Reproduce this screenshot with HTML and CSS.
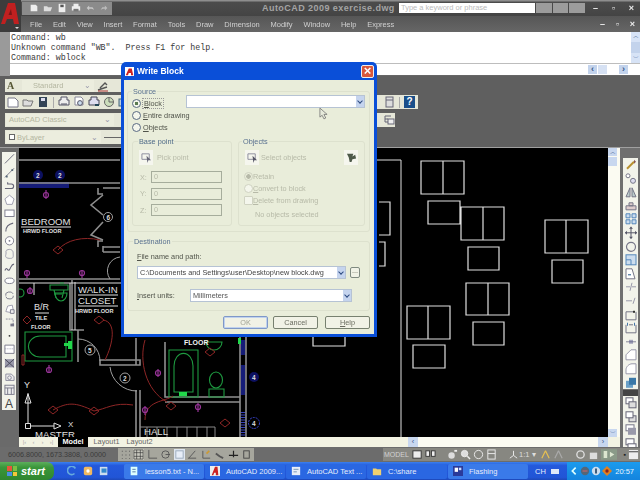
FILE: index.html
```html
<!DOCTYPE html>
<html lang="en">
<head>
<meta charset="utf-8">
<title>AutoCAD 2009 - Write Block</title>
<link rel="stylesheet" href="styles.css">
</head>
<body>
<div class="app">
  <svg class="logo" viewBox="0 0 21 32"><rect width="21" height="32" fill="#3c3c3c"/><path d="M1 24 8 3h7l4 21h-5l-1-5H7l-2 5z" fill="#c02020"/><path d="M8.500 15h3.500l-1-6z" fill="#7a1616"/><path d="m15 27 4 0-2 2z" fill="#ddd"/></svg>
  <header class="titlebar">
    <div class="quick">
      <svg class="qi" viewBox="0 0 12 12"><path d="M2 2h6l2 2v6H2z" fill="#eee"/></svg>
      <svg class="qi" viewBox="0 0 12 12"><path d="M1 4h4l1 1h5l-2 5H1z" fill="#ddd"/></svg>
      <svg class="qi" viewBox="0 0 12 12"><path d="M2 1h8v10H2z" fill="#eee"/><rect x="4" y="2" width="4" height="3" fill="#555"/></svg>
      <svg class="qi" viewBox="0 0 12 12"><path d="M3 1h6v3h2v5H1V4h2z" fill="#eee"/><rect x="3" y="7" width="6" height="3" fill="#777"/></svg>
      <svg class="qi" viewBox="0 0 12 12"><path d="M2 6 5 3v2h4l2 3-3-1H5v2z" fill="#c8c8c8"/></svg>
      <svg class="qi" viewBox="0 0 12 12"><path d="M10 6 7 3v2H4L2 8l3-1h2v2z" fill="#bbb"/></svg>
    </div>
    <div class="doc-title">AutoCAD 2009 exercise.dwg</div>
    <div class="search">Type a keyword or phrase</div>
    <div class="search-btns"><i></i><i></i><i></i></div>
    <div class="winbtns"><span>–</span><span>▫</span><span>×</span></div>
  </header>
  <nav class="menubar">
    <span>File</span><span>Edit</span><span>View</span><span>Insert</span><span>Format</span><span>Tools</span><span>Draw</span><span>Dimension</span><span>Modify</span><span>Window</span><span>Help</span><span>Express</span>
    <div class="winbtns small"><span>–</span><span>▫</span><span>×</span></div>
  </nav>
  <section class="cmd">
    <div class="cmd-log">
      <pre class="cmd-text">Command: wb
Unknown command "WB".  Press F1 for help.
Command: wblock</pre>
      <div class="cmd-scroll"><b>︿</b><i></i><b>﹀</b></div>
    </div>
    <div class="cmd-input"><span class="nav">‹</span><span class="nav pale"></span><span class="nav wide">›</span></div>
  </section>
  <section class="toolbars">
    <div class="tb tb1">
      <span class="tbtext">A</span>
      <div class="tcombo w72">Standard<em>⌄</em></div>
      <svg class="ti" viewBox="0 0 12 12"><path d="M1 10 10 7M3 8l5-5 2 2" fill="none" stroke="#555" stroke-width="1.4"/><path d="M1 11h10" stroke="#a33"/></svg>
    </div>
    <div class="tb tb2">
      <svg class="ti" viewBox="0 0 12 12"><path d="M1 2h7l3 3v6H1z" fill="#fff" stroke="#778"/></svg>
      <svg class="ti" viewBox="0 0 12 12"><path d="M1 4h4l1 1h5l-2 5H1z" fill="#ddd" stroke="#777"/></svg>
      <svg class="ti" viewBox="0 0 12 12"><path d="M2 1h8v10H2z" fill="#345"/><rect x="4" y="2" width="4" height="3" fill="#dde"/></svg>
      <i class="sep"></i>
      <svg class="ti" viewBox="0 0 12 12"><path d="M3 1h6v3h2v5H1V4h2z" fill="#eee" stroke="#556"/><path d="M3 8h6" stroke="#556"/></svg>
      <svg class="ti" viewBox="0 0 12 12"><path d="M2 1h6l2 2v6H2z" fill="#fff" stroke="#889"/><circle cx="7" cy="7" r="2.4" fill="#cde" stroke="#556"/></svg>
      <svg class="ti" viewBox="0 0 12 12"><path d="M3 1h6v3h2v5H1V4h2z" fill="#dde" stroke="#445"/><path d="M7 9h4" stroke="#245" stroke-width="2"/></svg>
      <svg class="ti" viewBox="0 0 12 12"><circle cx="6" cy="6" r="4.5" fill="#cdb" stroke="#666"/><path d="M6 2v4h4" stroke="#666" fill="none"/></svg>
      <svg class="ti" viewBox="0 0 12 12"><rect x="1" y="3" width="10" height="7" fill="#bcd" stroke="#467"/></svg>
      <div class="tb-fill"></div>
      <svg class="ti" viewBox="0 0 12 12"><path d="M4 1h4v10H4z" fill="#fff" stroke="#567"/></svg>
      <svg class="ti" viewBox="0 0 12 12"><rect x="3" y="1" width="7" height="10" fill="#ddd" stroke="#667"/><path d="M3 4h7" stroke="#667"/></svg>
      <i class="sep"></i>
      <span class="help-q">?</span>
    </div>
    <div class="tb tb3">
      <div class="tcombo w107">AutoCAD Classic<em>⌄</em></div>
      <div class="tb-fill"></div>
      <svg class="ti" viewBox="0 0 12 12"><path d="M2 2h6M2 5h3M2 8h3M2 2v6" stroke="#667" fill="none"/><rect x="5" y="5" width="6" height="5" fill="#eee" stroke="#667"/></svg>
    </div>
    <div class="tb tb4">
      <div class="tcombo w94"><u></u>ByLayer<em>⌄</em></div>
      <i class="linew"></i>
    </div>
  </section>
  <main class="work">
    <aside class="gutter">
      <div class="strip">
        <svg class="si" viewBox="0 0 12 12"><path d="m1 11 10-10" stroke="#667" fill="none"/></svg>
        <svg class="si" viewBox="0 0 12 12"><path d="m1 11 10-10" stroke="#778" fill="none"/><path d="M2 9h2v2H2zM8 2h2v2H8z" fill="#567"/></svg>
        <svg class="si" viewBox="0 0 12 12"><path d="M1 9h7a2.500 2.500 0 0 0 0-5H4V2" stroke="#667" fill="none" stroke-width="1.2"/></svg>
        <svg class="si" viewBox="0 0 12 12"><path d="m6 1 5 4-2 6H3L1 5z" stroke="#99a" fill="#fff"/></svg>
        <svg class="si" viewBox="0 0 12 12"><rect x="1" y="3" width="10" height="7" stroke="#778" fill="#fff"/></svg>
        <svg class="si" viewBox="0 0 12 12"><path d="M2 11C2 6 5 3 10 2" stroke="#667" fill="none" stroke-width="1.2"/></svg>
        <svg class="si" viewBox="0 0 12 12"><circle cx="6" cy="6" r="4.500" stroke="#778" fill="#fff"/><circle cx="6" cy="6" r="1" fill="#778"/></svg>
        <svg class="si" viewBox="0 0 12 12"><path d="M3 2c4-2 7 0 7 3s1 6-3 6-6-1-5-4-1-4 1-5z" stroke="#99a" fill="none"/></svg>
        <svg class="si" viewBox="0 0 12 12"><path d="M1 9c2-6 3 2 5-1s2-6 5-6" stroke="#667" fill="none" stroke-width="1.200"/></svg>
        <svg class="si" viewBox="0 0 12 12"><ellipse cx="6" cy="6" rx="5" ry="3" stroke="#778" fill="#fff"/></svg>
        <svg class="si" viewBox="0 0 12 12"><path d="M2 7a4 3 0 0 1 8-2M10 7a4 3 0 0 1-8 1" stroke="#778" fill="none"/></svg>
        <svg class="si" viewBox="0 0 12 12"><path d="M2 9 4 3l5-1 1 5-3 3z" stroke="#99a" fill="#fff"/><path d="M7 7h4v4H7z" stroke="#778" fill="#eee"/></svg>
        <svg class="si" viewBox="0 0 12 12"><path d="M2 3h8v6" stroke="#889" stroke-dasharray="2 1" fill="none"/><path d="M7 8h4v3H7z" fill="#778"/></svg>
        <svg class="si" viewBox="0 0 12 12"><circle cx="6" cy="6" r="1" fill="#333"/></svg>
        <svg class="si" viewBox="0 0 12 12"><path d="M1 2h10v9H1z" fill="#fff" stroke="#778"/><path d="M1 6h10" stroke="#99a" stroke-dasharray="1 1"/></svg>
        <svg class="si" viewBox="0 0 12 12"><path d="M1 2h10v9H1z" fill="#99a"/><path d="m1 2 10 9m0-9L1 11" stroke="#445"/></svg>
        <svg class="si" viewBox="0 0 12 12"><path d="M2 3h6l3 3v4H2z" fill="#eee" stroke="#889"/><circle cx="6" cy="7" r="2" fill="none" stroke="#889"/></svg>
        <svg class="si" viewBox="0 0 12 12"><rect x="1" y="1" width="10" height="10" fill="#eee" stroke="#778"/><path d="M1 4h10M4 4v7M8 4v7" stroke="#778"/></svg>
        <span class="si-a">A</span>
      </div>
    </aside>
    <div class="center">
      <div class="view">
        <svg class="drawing" viewBox="19 148 589 289">
          <rect x="19" y="148" width="589" height="289" fill="#000"/>
          <g fill="none" stroke="#151c78">
            <path d="M19 185h50" stroke-width="6"/>
            <path d="M243 412v25" stroke-width="5" stroke-dasharray="1 1.500" stroke="#3a44c0"/>
            <path d="M243 340v15M243 365v30" stroke-width="5"/>
            <circle cx="254" cy="423" r="5.500" stroke="#3a44d0" stroke-dasharray="2 1"/>
          </g>
          <g fill="#0c1060">
            <circle cx="38" cy="175" r="5"/><circle cx="60" cy="175" r="5"/><circle cx="254" cy="377" r="5"/>
          </g>
          <g class="walls" fill="none" stroke="#8e8e8e" stroke-width="1.600">
            <path d="M19 183h101M19 279h101M103 188h17M103 247h17"/>
            <path d="M98 188v6h5M98 247v-6h5M103 252h17M103 246v6"/>
            <path d="M103 195 91 205l12 10M103 222l-12 13 12 5"/>
            <path d="M70 283v47h14M78 330v32M100 360h40v5h-40zM136 338v27M136 390v47M140 390v47M240 337v100M246 337v100"/>
            <path d="M165 342v55h75M165 402h75"/>
            <path d="M401 160v277"/>
          </g>
          <g fill="none" stroke="#dcdcdc">
            <path d="M19 160h101M377 160h24"/>
            <path d="M19 283h110M34 283v12"/>
            <path d="M72 280v50M75 282v48"/>
          </g>
          <g fill="none" stroke="#a0a0a0" stroke-width="1">
            <path d="M78 339a22 22 0 0 1 22 22"/><path d="M110 367a27 27 0 0 0 27 24"/>
            <circle cx="108" cy="217" r="4.500"/><circle cx="90" cy="350" r="5"/><circle cx="125" cy="378" r="5"/>
            <path d="M120 257a14 14 0 0 0-10 22"/>
          </g>
          <g class="stairs" fill="none" stroke="#888">
            <path d="M140 427h75M147 427v10M157 427v10M167 427v10M177 427v10M187 427v10M197 427v10M207 427v10M215 427v10"/>
          </g>
          <g fill="none" stroke="#e0e0e0" stroke-width="1.200">
            <path d="M421 161h43v33h-43zM443 161v33M428 201h32v23h-32zM461 207h43v33h-43zM483 207v33M468 247h31v23h-31zM545 220h43v33h-43zM566 220v33M552 260h31v23h-31zM466 283h43v32h-43zM488 283v32M473 322h31v23h-31zM407 306h43v33h-43zM428 306v33M413 345h32v23h-32zM379 202h11v33h-11M379 242h6v24h-6M313 337v9h32v-9"/>
          </g>
          <g fill="none" stroke="#1e9a40" stroke-width="1.100">
            <path d="M25 332h47v29H25z"/><path d="M66 336H40a11 10 0 0 0 0 21h26z"/>
            <path d="M50 285h18v5H50zM54 290l2 8M64 290l-2 8M54 294h8"/><circle cx="20" cy="293" r="4"/>
            <path d="M55 293a6 8 0 1 0 12 0zM60 283h4"/>
            <path d="M169 350h29v47h-29z"/><path d="M174 392v-26a9 12 0 0 1 19 0v26z"/>
            <ellipse cx="216" cy="380" rx="6.500" ry="8"/><path d="M209 389h15v8h-15z"/>
            <path d="M222 342a8 8 0 0 1-16 0z"/>
          </g>
          <g fill="#21d84a"><rect x="64" y="343" width="8" height="3"/><rect x="68" y="341" width="4" height="8"/><rect x="179" y="392" width="8" height="4"/><rect x="238" y="338" width="3" height="6"/></g>
          <g fill="none" stroke="#8e2626" stroke-width="1">
            <path d="M58 250c8-10 25-14 42-10"/><path d="M53 410c15-8 22-8 41 1 12-2 20-9 39-6"/><path d="M103 320c14 2 10 24 2 40"/><path d="M145 340c-6 20 0 50 22 62"/><path d="M145 420c0-20 20-18 28-24"/>
            <path d="m53 250 5-4 5 4-5 4zM23 320l4-4 4 4-4 4zM94 320l5-4 5 4-5 4zM48 410l5-4 5 4-5 4zM89 411l5-4 5 4-5 4zM205 352l5-4 5 4-5 4zM220 423l5-4 5 4-5 4zM166 406l5-4 5 4-5 4zM22 355h2v10h-2z"/>
          </g>
          <g fill="none" stroke="#983498" stroke-width="1.200">
            <path d="M46 190v9M27 270v8M82 270v8M30 287v6M49 365v7M158 369v8M145 406v9M198 403v9"/>
            <circle cx="46" cy="195" r="2.500"/><circle cx="27" cy="273" r="2.500"/><circle cx="82" cy="273" r="2.500"/><circle cx="30" cy="291" r="2.500"/><circle cx="49" cy="370" r="2.500"/><circle cx="158" cy="373" r="2.500"/><circle cx="145" cy="410" r="2.500"/><circle cx="198" cy="407" r="2.500"/>
          </g>
          <g fill="none" stroke="#e0e0e0">
            <path d="M21 227h50M35 313h14M78 295h40M78 306h40"/>
            <path d="M25.500 423.500h5v5h-5zM28 423v-30M25 403l3-9 3 9zM31 426h23M54 423l7 3-7 3z"/>
          </g>
          <text class="t-big" x="21" y="225">BEDROOM</text>
          <text class="t-sm" x="23" y="233">HRWD FLOOR</text>
          <text class="t-big" x="78" y="293">WALK-IN</text>
          <text class="t-big" x="78" y="304">CLOSET</text>
          <text class="t-sm" x="75" y="313">HRWD FLOOR</text>
          <text class="t-mid" x="34" y="310">B/R</text>
          <text class="t-sm" x="35" y="320">TILE</text>
          <text class="t-sm" x="31" y="329">FLOOR</text>
          <text class="t-sm2" x="184" y="345">FLOOR</text>
          <text class="t-mid" x="24" y="388">Y</text>
          <text class="t-x" x="68" y="427">X</text>
          <text class="t-big" x="35" y="437.500">MASTER</text>
          <text class="t-big" x="144" y="435">HALL</text>
          <text class="t-num" x="36" y="177.500">2</text><text class="t-num" x="58" y="177.500">2</text>
          <text class="t-num" x="106.500" y="219.500">6</text><text class="t-num" x="88" y="352.500">5</text>
          <text class="t-num" x="123" y="380.500">2</text><text class="t-num" x="252" y="380">4</text><text class="t-num" x="252" y="426">4</text>
        </svg>
        <div class="vscroll"><b>︿</b><i></i><span></span><b>﹀</b></div>
      </div>
      <div class="tabsrow">
        <div class="tabnav"><i>|‹</i><i>‹</i><i>›</i><i>›|</i></div>
        <span class="tab active">Model</span><span class="tab">Layout1</span><span class="tab">Layout2</span>
        <div class="hscroll"><b>‹</b><span></span><b>›</b></div>
      </div>
    </div>
    <aside class="rightbar">
      <div class="strip right">
        <svg class="si" viewBox="0 0 12 12"><path d="m2 10 7-7" stroke="#b89030" stroke-width="2"/><path d="m9 1 2 2-2 2z" fill="#855"/></svg>
        <svg class="si" viewBox="0 0 12 12"><circle cx="3" cy="3" r="2" fill="#fff" stroke="#778"/><circle cx="8" cy="8" r="2.500" fill="#dde" stroke="#778"/></svg>
        <svg class="si" viewBox="0 0 12 12"><path d="M5 2v9H1zM7 2v9h4z" fill="#bcc" stroke="#778"/></svg>
        <svg class="si" viewBox="0 0 12 12"><path d="M4 3h4v3H4zM1 6h10v4H1z" fill="#dcc" stroke="#778"/></svg>
        <svg class="si" viewBox="0 0 12 12"><path d="M1 1h4v4H1zM7 1h4v4H7zM1 7h4v4H1zM7 7h4v4H7z" fill="#cde" stroke="#58b"/></svg>
        <svg class="si" viewBox="0 0 12 12"><path d="M6 0v12M0 6h12" stroke="#556"/><path d="m6 0 2 2H4zM6 12 4 10h4zM0 6l2-2v4zM12 6l-2-2v4z" fill="#556"/></svg>
        <svg class="si" viewBox="0 0 12 12"><circle cx="6" cy="6" r="4.500" fill="none" stroke="#778" stroke-width="1.200"/></svg>
        <svg class="si" viewBox="0 0 12 12"><rect x="1" y="1" width="10" height="10" fill="#cde" stroke="#58b"/><path d="M1 6h5v5" fill="none" stroke="#58b"/></svg>
        <svg class="si" viewBox="0 0 12 12"><path d="M1 1h6l3 10H1z" fill="#fff" stroke="#778"/><path d="M3 7h3" stroke="#258"/></svg>
        <svg class="si" viewBox="0 0 12 12"><path d="M1 6h4m2 0h4M7 2 5 10" stroke="#99a" fill="none"/></svg>
        <svg class="si" viewBox="0 0 12 12"><path d="M1 6h6M10 3 8 9" stroke="#99a" fill="none"/></svg>
        <svg class="si" viewBox="0 0 12 12"><path d="M8 3H1v8h10V3" fill="none" stroke="#778"/><rect x="8" y="2" width="2" height="2" fill="#333"/></svg>
        <svg class="si" viewBox="0 0 12 12"><path d="M1 3v8h10V3M4 3h4" fill="none" stroke="#778"/><path d="M2 1h1v3H2zM9 1h1v3H9z" fill="#47a"/></svg>
        <svg class="si" viewBox="0 0 12 12"><path d="M1 6h10" stroke="#889"/><path d="M5 4v4M7 4v4" stroke="#558"/></svg>
        <svg class="si" viewBox="0 0 12 12"><path d="M1 11V6l5-5h5v10z" fill="#fff" stroke="#99a"/></svg>
        <svg class="si" viewBox="0 0 12 12"><path d="M1 11V7c0-3 3-6 6-6h4v10z" fill="#fff" stroke="#99a"/></svg>
        <svg class="si" viewBox="0 0 12 12"><path d="M1 4h7v7H1z" fill="#6aa0c8"/><path d="M4 1h7v7H4z" fill="#3a78a8"/></svg>
      </div>
      <div class="grip"></div>
      <div class="strip right tail">
        <svg class="si" viewBox="0 0 12 12"><rect x="1" y="1" width="7" height="6" fill="#fff" stroke="#667"/><rect x="4" y="5" width="7" height="6" fill="#ddd" stroke="#667"/></svg>
        <svg class="si" viewBox="0 0 12 12"><rect x="4" y="5" width="7" height="6" fill="#ddd" stroke="#667"/><rect x="1" y="1" width="7" height="6" fill="#fff" stroke="#667"/></svg>
        <svg class="si" viewBox="0 0 12 12"><rect x="1" y="1" width="8" height="6" fill="#fff" stroke="#778"/><rect x="3" y="4" width="8" height="7" fill="#99a"/></svg>
        <svg class="si" viewBox="0 0 12 12"><rect x="1" y="1" width="8" height="6" fill="#fff" stroke="#667"/><rect x="3" y="6" width="8" height="5" fill="#fff" stroke="#667"/></svg>
      </div>
    </aside>
  </main>
  <footer class="status">
    <span class="coords">6006.8000, 1673.3808, 0.0000</span>
    <div class="modes">
      <svg class="mi" viewBox="0 0 12 12"><path d="M2 2h1v1H2zM6 2h1v1H6zM10 2h1v1h-1zM2 6h1v1H2zM6 6h1v1H6zM10 6h1v1h-1zM2 10h1v1H2zM6 10h1v1H6zM10 10h1v1h-1z" fill="#555"/></svg>
      <svg class="mi on" viewBox="0 0 12 12"><path d="M1 1h10v10H1zM4 1v10M8 1v10M1 4h10M1 8h10" fill="none" stroke="#333" stroke-width=".7"/></svg>
      <svg class="mi" viewBox="0 0 12 12"><path d="M2 1v9h9" fill="none" stroke="#555"/></svg>
      <svg class="mi" viewBox="0 0 12 12"><circle cx="6" cy="6" r="4" fill="none" stroke="#555"/><path d="M6 6h5" stroke="#555"/></svg>
      <svg class="mi lit" viewBox="0 0 12 12"><rect x="2" y="2" width="8" height="8" fill="#e8eef8" stroke="#9ab"/></svg>
      <svg class="mi" viewBox="0 0 12 12"><path d="M1 10h9M2 10l7-8" fill="none" stroke="#555"/></svg>
      <svg class="mi" viewBox="0 0 12 12"><path d="M2 2v8h8" fill="none" stroke="#555"/><path d="M6 5l3-3" stroke="#c93" stroke-width="2"/></svg>
      <svg class="mi" viewBox="0 0 12 12"><path d="m2 5 4 3 4 2" fill="none" stroke="#555" stroke-width="2"/></svg>
      <svg class="mi" viewBox="0 0 12 12"><path d="M6 2v7M1 7h10" stroke="#222" stroke-width="1.300"/></svg>
      <svg class="mi" viewBox="0 0 12 12"><rect x="3" y="2" width="6" height="8" fill="none" stroke="#444"/></svg>
    </div>
    <div class="status-right">
      <span class="model">MODEL</span>
      <svg class="mi" viewBox="0 0 12 12"><rect x="1" y="2" width="9" height="8" fill="#eee" stroke="#333"/></svg>
      <svg class="mi" viewBox="0 0 12 12"><rect x="1" y="2" width="4" height="6" fill="#eee" stroke="#333"/><rect x="7" y="2" width="4" height="6" fill="#eee" stroke="#333"/></svg>
      <i class="gap"></i>
      <svg class="mi" viewBox="0 0 12 12"><circle cx="5" cy="7" r="3.500" fill="#ddd"/><path d="M8 2h3" stroke="#eee" stroke-width="2"/></svg>
      <svg class="mi" viewBox="0 0 12 12"><circle cx="5" cy="5" r="3.500" fill="#ddd" stroke="#eee"/><path d="m8 8 3 3" stroke="#eee" stroke-width="1.500"/></svg>
      <svg class="mi" viewBox="0 0 12 12"><circle cx="6" cy="6" r="4.500" fill="none" stroke="#eee"/></svg>
      <svg class="mi" viewBox="0 0 12 12"><rect x="2" y="1" width="8" height="10" fill="none" stroke="#eee"/><path d="M2 5h8" stroke="#eee"/></svg>
      <i class="gap"></i>
      <span class="scale"><svg class="mi" viewBox="0 0 12 12"><path d="M6 2v5L2 10M6 7l4 3" fill="none" stroke="#eee"/></svg>1:1 ▾</span>
      <svg class="mi" viewBox="0 0 12 12"><path d="M6 2 2 10M6 2l4 8" stroke="#e8c050" stroke-width="1.300"/></svg>
      <svg class="mi" viewBox="0 0 12 12"><path d="M6 2 2 10M6 2l4 8" stroke="#aaa" stroke-width="1.300"/></svg>
      <i class="gap"></i>
      <svg class="mi" viewBox="0 0 12 12"><circle cx="6" cy="6" r="4" fill="none" stroke="#ddd" stroke-width="1.500"/></svg>
      <svg class="mi" viewBox="0 0 12 12"><path d="M2 4h8v7H2z" fill="#ddd"/></svg>
      <svg class="mi wide" viewBox="0 0 18 12"><rect width="18" height="12" fill="#8a9a88"/><path d="M3 2h4v8H3zm7 1 5 3-5 3z" fill="#dde6d0"/></svg>
      <span class="dotbtn">▪</span>
      <svg class="mi" viewBox="0 0 12 12"><rect x="1" y="1" width="10" height="10" fill="#eee"/><path d="M1 3h10" stroke="#333"/></svg>
    </div>
  </footer>
  <footer class="taskbar">
    <div class="start"><span class="flag"><i></i><i></i><i></i><i></i></span>start</div>
    <div class="launch">
      <svg class="li" viewBox="0 0 12 12"><path d="M10 3A5 5 0 1 0 9 9" fill="none" stroke="#6ad" stroke-width="2"/></svg>
      <svg class="li" viewBox="0 0 12 12"><rect x="1" y="1" width="10" height="10" rx="2" fill="#f0b860"/><circle cx="6" cy="6" r="2" fill="#fff"/></svg>
      <svg class="li" viewBox="0 0 12 12"><rect x="1" y="1" width="9" height="10" fill="#cde"/><rect x="3" y="3" width="6" height="5" fill="#38c"/></svg>
    </div>
    <div class="tasks">
      <div class="task lit"><svg class="li" viewBox="0 0 12 12"><path d="M2 1h8v10H2z" fill="#dff"/><path d="M4 4h4M4 7h4" stroke="#469"/></svg>lesson5.txt - N...</div>
      <div class="task"><svg class="li" viewBox="0 0 12 12"><rect width="12" height="12" fill="#eee"/><path d="M2 11 6 1h3l1 10H7V8H5l-1 3z" fill="#c22"/></svg>AutoCAD 2009...</div>
      <div class="task"><svg class="li" viewBox="0 0 12 12"><rect x="1" y="1" width="10" height="10" fill="#e8eef8"/><path d="M3 4h6M3 7h4" stroke="#68a"/></svg>AutoCAD Text ...</div>
      <div class="task"><svg class="li" viewBox="0 0 12 12"><path d="M1 3h4l1 1h5v7H1z" fill="#f0d070"/></svg>C:\share</div>
      <div class="task lit"><svg class="li" viewBox="0 0 12 12"><rect width="12" height="12" fill="#2a3a9a"/><rect x="2" y="2" width="4" height="5" fill="#fff"/><rect x="7" y="2" width="3" height="3" fill="#cdf"/></svg>Flashing</div>
    </div>
    <div class="lang">CH <u></u></div>
    <div class="tray">
      <svg class="tri" viewBox="0 0 12 12"><path d="m8 2-4 4 4 4" fill="none" stroke="#dff" stroke-width="2"/></svg>
      <svg class="tri" viewBox="0 0 12 12"><circle cx="6" cy="6" r="5" fill="#567"/><path d="M3 6h6" stroke="#e66"/></svg>
      <svg class="tri" viewBox="0 0 12 12"><circle cx="6" cy="6" r="5" fill="#cde"/><path d="M6 3v6" stroke="#246" stroke-width="2"/></svg>
      <svg class="tri" viewBox="0 0 12 12"><path d="M6 0 12 6 6 12 0 6z" fill="#e08020"/><circle cx="6" cy="6" r="2" fill="#822"/></svg>
      <span class="clock">20:57</span>
    </div>
  </footer>

  <section class="dialog" aria-label="Write Block">
    <div class="dlg-title">
      <svg class="dlg-icon" viewBox="0 0 12 12"><rect width="12" height="12" fill="#fff"/><path d="M1 11 5 2h4l2 9H8V8H5l-1 3z" fill="#c22"/></svg>
      <span>Write Block</span>
      <span class="dlg-close">×</span>
    </div>
    <div class="dlg-body">
      <div class="group source">
        <div class="legend">Source</div>
        <div class="source-top">
          <div class="radios">
            <label class="radio sel"><i></i><span class="focus"><u>B</u>lock</span></label>
            <label class="radio"><i></i><span><u>E</u>ntire drawing</span></label>
            <label class="radio"><i></i><span><u>O</u>bjects</span></label>
          </div>
          <div class="combo blank"><span></span><b></b></div>
        </div>
        <div class="subgroups">
          <div class="group base">
            <div class="legend off">Base point</div>
            <div class="pick"><span class="pick-btn"><svg viewBox="0 0 12 12"><path d="M1 2h8v6H1z" fill="none" stroke="#889"/><path d="m6 4 5 5-3 0-1 3z" fill="#667"/></svg></span><span class="dis">Pick point</span></div>
            <div class="coord"><span class="dis">X:</span><div class="field">0</div></div>
            <div class="coord"><span class="dis">Y:</span><div class="field">0</div></div>
            <div class="coord"><span class="dis">Z:</span><div class="field">0</div></div>
          </div>
          <div class="group objs">
            <div class="legend">Objects</div>
            <div class="pick"><span class="pick-btn"><svg viewBox="0 0 12 12"><path d="M1 2h8v6H1z" fill="none" stroke="#889"/><path d="m6 4 5 5-3 0-1 3z" fill="#556"/></svg></span><span class="dis">Select objects</span><span class="pick-btn end"><svg viewBox="0 0 12 12"><path d="M1 2h7l-1 3 3-2 1 4-4 1-1 3H4L3 6z" fill="#4e5a4a"/></svg></span></div>
            <label class="radio off sel"><i></i><span class="dis">Retain</span></label>
            <label class="radio off"><i></i><span class="dis"><u>C</u>onvert to block</span></label>
            <label class="radio off sq"><i></i><span class="dis"><u>D</u>elete from drawing</span></label>
            <div class="none-sel dis">No objects selected</div>
          </div>
        </div>
      </div>
      <div class="group dest">
        <div class="legend">Destination</div>
        <div class="dest-label"><u>F</u>ile name and path:</div>
        <div class="dest-row">
          <div class="combo path"><span>C:\Documents and Settings\user\Desktop\new block.dwg</span><b></b></div>
          <span class="dots">...</span>
        </div>
        <div class="units-row">
          <span class="units-label"><u>I</u>nsert units:</span>
          <div class="combo units"><span>Millimeters</span><b></b></div>
        </div>
      </div>
      <div class="actions">
        <button class="btn def" type="button">OK</button>
        <button class="btn" type="button">Cancel</button>
        <button class="btn help" type="button"><u>H</u>elp</button>
      </div>
    </div>
  </section>
  <svg class="cursor" viewBox="0 0 10 14"><path d="M1 1v10l2.500-2 2 4 2-1-2-4H9z" fill="#e6eadb" stroke="#6a6a6a" stroke-width=".8"/></svg>
</div>
</body>
</html>
```

FILE: styles.css
```css
* { box-sizing: border-box; }
html, body { margin: 0; padding: 0; background: #000; }
.app {
  position: relative;
  width: 640px;
  height: 480px;
  overflow: hidden;
  display: flex;
  flex-direction: column;
  font-family: "Liberation Sans", Arial, sans-serif;
  font-size: 7.5px;
  filter: blur(.55px);
}
svg { display: block; }
i, b, em { font-style: normal; font-weight: normal; }

/* title and menu */
.logo { position: absolute; left: 0; top: 0; width: 21px; height: 32px; }
.titlebar {
  height: 16px;
  display: flex;
  align-items: center;
  padding-left: 22px;
  background: linear-gradient(#8e8e8e 0 1px, #4c4c4c 2px, #444 100%);
  color: #ddd;
}
.quick {
  width: 90px;
  height: 13px;
  display: flex;
  align-items: center;
  gap: 4px;
  padding-left: 7px;
  background: #8b8b8b;
  flex: none;
}
.qi { width: 10px; height: 10px; }
.doc-title {
  width: 287px;
  flex: none;
  padding-left: 150px;
  font-size: 9px;
  font-weight: bold;
  letter-spacing: .45px;
  color: #a4a4a4;
  white-space: nowrap;
}
.search {
  width: 136px;
  flex: none;
  height: 10px;
  line-height: 10px;
  background: #fff;
  color: #bbb;
  font-size: 7.5px;
  padding-left: 2px;
  white-space: nowrap;
  overflow: hidden;
}
.search-btns { width: 50px; flex: none; height: 10px; display: flex; gap: 1px; padding-left: 1px; }
.search-btns i { flex: 1; background: #9c9c9c; }
.winbtns { flex: 1; display: flex; justify-content: flex-end; gap: 7px; padding-right: 3px; color: #eee; font-size: 9px; font-weight: bold; line-height: 10px; }
.winbtns span { width: 11px; text-align: center; }
.winbtns.small { margin-left: auto; flex: none; gap: 4px; padding-right: 2px; }
.menubar {
  height: 16px;
  display: flex;
  align-items: center;
  gap: 10.8px;
  padding-left: 30px;
  background: linear-gradient(#565656, #666);
  color: #d0d0d0;
  font-size: 7.5px;
}

/* command window */
.cmd { height: 44px; background: #fff; padding-left: 10px; position: relative; display: flex; flex-direction: column; }
.cmd::before { content: ""; position: absolute; left: 0; top: 0; bottom: 0; width: 10px; background: #9a9a9a; }
.cmd-log { height: 32px; display: flex; border-bottom: 1px solid #bdbdbd; }
.cmd-text {
  flex: 1;
  margin: 0;
  padding: 1px 0 0 1px;
  font-family: "Liberation Mono", monospace;
  font-size: 8.3px;
  line-height: 10.2px;
  color: #3a3a3a;
}
.cmd-scroll { width: 9px; background: #d7e3f6; display: flex; flex-direction: column; color: #3c5c90; font-size: 6px; line-height: 9px; text-align: center; }
.cmd-scroll i { flex: 1; background: #c3d3ec; margin: 1px 0; }
.cmd-input { flex: 1; display: flex; justify-content: flex-end; align-items: center; padding-right: 12px; gap: 1px; border-bottom: 1px solid #666; }
.nav { width: 9px; height: 9px; background: #c3d3ec; color: #35568a; font-size: 9px; line-height: 8px; text-align: center; font-weight: bold; }
.nav.pale { background: #d6e1f3; }
.nav.wide { margin-left: 11px; }

/* toolbars */
.toolbars {
  height: 72px;
  background: #5f5f5f;
  padding: 3px 0 0 5px;
  display: flex;
  flex-direction: column;
  gap: 3.4px;
  border-bottom: 1px solid #a0a0a0;
}
.tb { height: 14px; display: flex; align-items: center; gap: 3px; background: #e6e7d8; flex: none; }
.tb1 { width: 120px; height: 13px; }
.tb2 { width: 413px; padding-left: 2px; }
.tb3 { width: 390px; padding-left: 1px; }
.tb4 { width: 120px; padding-left: 1px; }
.tb-fill { flex: 1; }
.tbtext { width: 13px; padding-left: 2px; color: #553; font: bold 10px "Liberation Serif", serif; }
.ti { width: 12px; height: 12px; flex: none; }
.sep { width: 1px; height: 11px; background: #aaa; flex: none; margin: 0 1px; }
.help-q { width: 11px; height: 12px; flex: none; background: #1a4f8a; color: #fff; font: bold 10px/12px "Liberation Sans", sans-serif; text-align: center; margin-right: 3px; }
.tcombo { height: 12px; display: flex; align-items: center; background: #ecedde; color: #b4b6a0; padding-left: 10px; flex: none; font-size: 7.5px; }
.tcombo em { margin-left: auto; padding-right: 3px; color: #99a; font-size: 8px; line-height: 7px; }
.tb3 .tcombo, .tb4 .tcombo { padding-left: 3px; }
.w72 { width: 72px; margin-left: 1px; padding-left: 11px; }
.w94 { width: 95px; }
.w107 { width: 108px; }
.tcombo u { display: block; width: 6px; height: 6px; border: 1px solid #666; background: #fff; margin-right: 2px; }
.linew { flex: 1; height: 1px; background: #666; }

/* work area */
.work { height: 299px; display: flex; background: #6a6a6a; flex: none; }
.gutter { width: 19px; flex: none; padding: 4px 0 0 2px; }
.strip { width: 14px; background: #f2f3ea; display: flex; flex-direction: column; align-items: center; }
.si { width: 11px; height: 13.6px; flex: none; }
.si-a { height: 13.6px; font: 12px/14px "Liberation Sans", sans-serif; color: #444; flex: none; }
.center { flex: 1; min-width: 0; display: flex; flex-direction: column; }
.view { height: 289px; display: flex; flex: none; }
.drawing { width: 589px; height: 289px; flex: none; }
.t-big { font: 9.600px "Liberation Sans", sans-serif; fill: #e0e0e0; }
.t-mid { font: 9px "Liberation Sans", sans-serif; fill: #e0e0e0; }
.t-x { font: 8px "Liberation Sans", sans-serif; fill: #e0e0e0; }
.t-sm { font: bold 5.600px "Liberation Sans", sans-serif; fill: #e0e0e0; }
.t-sm2 { font: bold 7px "Liberation Sans", sans-serif; fill: #f4f4f4; }
.t-num { font: bold 6.500px "Liberation Sans", sans-serif; fill: #ddd; }
.vscroll { width: 12px; flex: none; background: #fbfbf2; display: flex; flex-direction: column; color: #3c5c90; font-size: 6px; line-height: 8px; text-align: center; padding-right: 3px; }
.vscroll b { height: 8px; background: #c8d7ef; }
.vscroll i { height: 9px; background: #c8d7ef; margin-top: 1px; }
.vscroll span { flex: 1; }
.tabsrow { height: 10px; flex: none; background: #f3f3e3; display: flex; align-items: center; font-size: 7.3px; color: #666; }
.tabnav { width: 39px; display: flex; gap: 2px; padding-left: 2px; color: #aaa; font-size: 6px; }
.tabnav i { width: 7px; text-align: center; }
.tab { width: 33px; text-align: center; line-height: 10px; }
.tab.active { background: #000; color: #fff; font-weight: bold; margin-right: 2px; width: 30px; }
.hscroll { margin-left: auto; width: 200px; height: 10px; margin-right: 12px; display: flex; align-items: center; color: #35568a; font-weight: bold; background: #fbfbf2; }
.hscroll b { width: 10px; height: 10px; line-height: 9px; text-align: center; background: #c8d7ef; }
.hscroll span { flex: 1; }
.rightbar { width: 20px; flex: none; padding: 10px 2px 0 3px; display: flex; flex-direction: column; align-items: flex-start; background: #6f6f6f; }
.strip.right { width: 15px; }
.strip.right .si { width: 12px; }
.grip { height: 6px; width: 15px; flex: none; background: #444; margin-top: 1px; }
.strip.tail { height: 59px; }

/* status bar */
.status { height: 15px; flex: none; background: #6c6c6c; display: flex; align-items: center; padding-left: 8px; color: #3b3b3b; font-size: 7.2px; }
.coords { width: 110px; white-space: nowrap; }
.modes { width: 136px; height: 13px; background: #a6a69d; display: flex; align-items: center; justify-content: space-between; padding: 0 2px; }
.mi { width: 11px; height: 11px; flex: none; }
.mi.on { background: #c9c9bf; }
.mi.lit { background: #dfe6ef; }
.mi.wide { width: 16px; }
.status-right { margin-left: auto; width: 257px; flex: none; display: flex; align-items: center; gap: 2px; height: 13px; background: #878781; padding-right: 1px; justify-content: flex-end; color: #eee; }
.model { width: 26px; color: #d2d2d2; font-size: 7px; }
.gap { width: 7px; flex: none; }
.scale { display: flex; align-items: center; color: #ddd; font-size: 7.5px; margin-right: 2px; }
.dotbtn { color: #222; font-size: 7px; margin-left: 5px; }

/* taskbar */
.taskbar { height: 18px; flex: none; background: linear-gradient(#3b80ee, #2459dc 20%, #2155d6 85%, #1d48b8); display: flex; align-items: center; color: #e6ecfa; font-size: 7.5px; }
.start {
  width: 54px;
  height: 18px;
  background: linear-gradient(#5cae5c, #3a963a 30%, #2f862f);
  border-radius: 0 7px 7px 0;
  color: #fff;
  font: italic bold 11px/18px "Liberation Sans", sans-serif;
  display: flex;
  align-items: center;
  gap: 4px;
  padding-left: 7px;
}
.flag { width: 10px; height: 10px; display: grid; grid-template-columns: 1fr 1fr; gap: 1px; flex: none; }
.flag i:nth-child(1) { background: #e8553b; }
.flag i:nth-child(2) { background: #7cc043; }
.flag i:nth-child(3) { background: #4a90e0; }
.flag i:nth-child(4) { background: #f2c83a; }
.launch { width: 70px; display: flex; gap: 6px; padding-left: 13px; }
.li { width: 10px; height: 10px; flex: none; }
.tasks { display: flex; gap: 1px; }
.task { width: 80px; height: 15px; display: flex; align-items: center; gap: 6px; padding-left: 5px; background: #2a67e2; border-radius: 2px; white-space: nowrap; overflow: hidden; }
.task.lit { background: #3a7ae9; }
.lang { flex: 1; display: flex; align-items: center; gap: 5px; padding-left: 7px; color: #e6eefc; }
.lang u { display: block; width: 8px; height: 5px; background: #dfe8f8; text-decoration: none; }
.tray { width: 73px; height: 18px; background: linear-gradient(#1b9bee, #1484de); display: flex; align-items: center; gap: 1px; padding-left: 2px; color: #e8f4ff; font-size: 7.5px; }
.tri { width: 10px; height: 10px; flex: none; }
.clock { margin-left: auto; padding-right: 6px; }

/* dialog */
.dialog {
  position: absolute;
  left: 121px;
  top: 62px;
  width: 256px;
  height: 275px;
  background: #0a4fd8;
  border-radius: 5px 5px 0 0;
  padding: 0 3px 3px;
  display: flex;
  flex-direction: column;
}
.dlg-title { height: 18px; flex: none; display: flex; align-items: center; gap: 3px; padding-left: 1px; color: #fff; font-weight: bold; font-size: 8.500px; }
.dlg-icon { width: 9px; height: 9px; }
.dlg-close { margin-left: auto; width: 13px; height: 13px; background: #d9583c; border: 1px solid #eee; border-radius: 2px; text-align: center; font-size: 13px; line-height: 10px; }
.dlg-body { flex: 1; background: #e9edda; padding: 11px 4px 0 3px; color: #5a5d50; font-size: 7.300px; display: flex; flex-direction: column; }
.group { border: 1px solid #dde1ce; border-radius: 3px; }
.legend { height: 9px; line-height: 9px; width: fit-content; margin: -5px 0 0 0; padding: 0 1px; background: #e9edda; color: #58708f; font-size: 7.300px; white-space: nowrap; }
.legend.off { color: #4f6b88; }
.base .legend { margin-left: -1px; }
.objs .legend { margin-left: -3px; }
.dest .legend { margin-left: -4px; }
.source { height: 141px; padding: 0 4px; flex: none; }
.source-top { display: grid; grid-template-columns: 54px 179px; margin-top: 1px; }
.radios { display: flex; flex-direction: column; }
.radio { height: 12px; display: flex; align-items: center; gap: 2px; white-space: nowrap; color: #50534a; }
.radio i { width: 9px; height: 9px; border: 1px solid #5a6a82; border-radius: 50%; background: #f4f6ec; flex: none; }
.radio.sel i { background: radial-gradient(circle, #5a7a50 0 1.500px, #f4f6ec 2px); }
.radio.off i { border-color: #d0d3c2; }
.radio.off.sel i { background: radial-gradient(circle, #b6b9a8 0 2px, #e9edda 2.500px); }
.radio.sq i { border-radius: 1px; }
.objs .radio { gap: 0; margin-left: -1px; }
.focus { outline: 1px dotted #999; padding: 0 1px; }
.combo { height: 13px; background: #fff; border: 1px solid #b6c3d4; display: flex; align-items: center; padding-left: 2px; color: #555; white-space: nowrap; overflow: hidden; }
.combo span { flex: 1; overflow: hidden; }
.combo b { width: 8px; height: 11px; flex: none; background: #c5d4ee; position: relative; }
.combo b::after { content: ""; position: absolute; left: 2px; top: 3px; width: 3px; height: 3px; border: solid #2c4a80; border-width: 0 1.500px 1.500px 0; transform: rotate(45deg); }
.combo.blank { margin-top: -2px; }
.subgroups { display: flex; gap: 6px; margin-top: 8px; }
.base { width: 100px; height: 85px; padding: 0 0 0 6px; }
.objs { width: 127px; height: 85px; padding: 0 6px; }
.pick { height: 15px; display: flex; align-items: center; gap: 4px; margin-top: 4px; }
.objs .pick { gap: 2px; }
.pick-btn { width: 14px; height: 15px; background: #f5f6ee; flex: none; display: flex; align-items: center; justify-content: center; }
.pick-btn svg { width: 11px; height: 11px; }
.pick-btn.end { margin-left: auto; }
.dis { color: #b7baa8; white-space: nowrap; }
.coord { display: flex; align-items: center; height: 12px; margin-top: 4.500px; }
.pick + .coord { margin-top: 6px; }
.coord .dis { width: 12px; padding-left: 1px; }
.field { width: 71px; height: 12px; line-height: 10px; border: 1px solid #a6ad9c; background: #e9edda; color: #b7baa8; padding-left: 2px; }
.objs .pick + .radio { margin-top: 5px; }
.none-sel { margin: 4px 0 0 10px; line-height: 10px; }
.dest { height: 70px; margin-top: 9px; padding: 0 9px; flex: none; }
.dest-label { margin-top: 6px; line-height: 10px; color: #50534a; }
.dest-row { display: flex; align-items: center; gap: 4px; margin-top: 4px; }
.path { width: 215px; color: #444; }
.dots { width: 10px; height: 11px; flex: none; border: 1px solid #7f8a80; border-radius: 2px; background: #f0f2e6; text-align: center; line-height: 5px; }
.units-row { display: flex; align-items: center; margin-top: 10px; }
.units-label { width: 53px; color: #50534a; }
.units { width: 162px; }
.actions { display: flex; justify-content: flex-end; gap: 5px; margin-top: 5px; }
.btn { width: 45px; height: 13px; padding: 0; border: 1px solid #77806f; border-radius: 2px; background: #f1f2e6; color: #6a6c60; font: 7.300px/11px "Liberation Sans", sans-serif; }
.btn.def { border: 1px solid #7f98c8; box-shadow: inset 0 0 0 1px #c0d2ee; color: #a0a294; }
.btn.help { margin-left: 2px; }
.cursor { position: absolute; left: 319px; top: 107px; width: 9px; height: 13px; }
```
